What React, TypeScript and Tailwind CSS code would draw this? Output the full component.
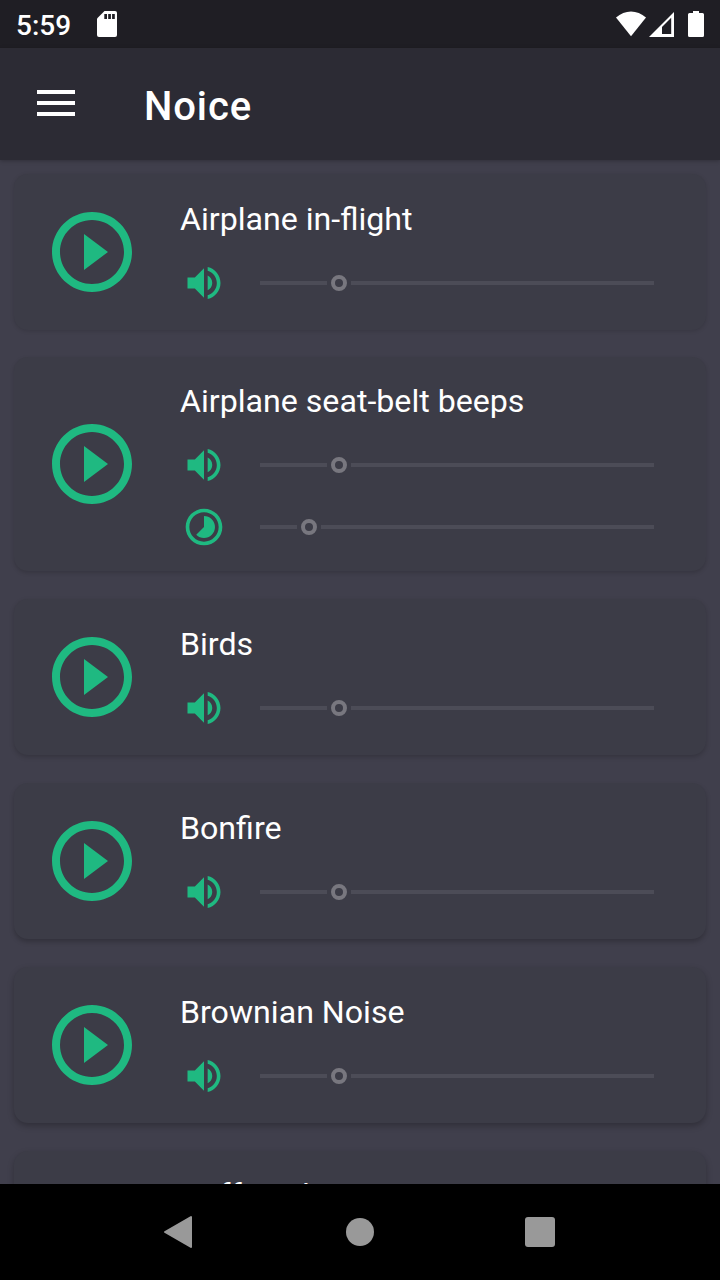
const PLAY =
  "M10 16.5l6-4.5-6-4.5v9zM12 2C6.48 2 2 6.48 2 12s4.48 10 10 10 10-4.48 10-10S17.52 2 12 2zm0 18c-4.41 0-8-3.59-8-8s3.59-8 8-8 8 3.59 8 8-3.59 8-8 8z";
const VOLUME =
  "M3 9v6h4l5 5V4L7 9H3zm13.5 3c0-1.77-1.02-3.29-2.5-4.03v8.05c1.48-.73 2.5-2.25 2.5-4.02zM14 3.23v2.06c2.89.86 5 3.54 5 6.71s-2.11 5.85-5 6.71v2.06c4.01-.91 7-4.49 7-8.77s-2.99-7.86-7-8.77z";
const TIMELAPSE =
  "M16.24 7.76C15.07 6.59 13.54 6 12 6v6l-4.24 4.24c2.34 2.34 6.14 2.34 8.49 0 2.34-2.34 2.34-6.14-.01-8.48zM12 2C6.48 2 2 6.48 2 12s4.48 10 10 10 10-4.48 10-10S17.52 2 12 2zm0 18c-4.42 0-8-3.58-8-8s3.58-8 8-8 8 3.58 8 8-3.58 8-8 8z";

function Icon({ d, className }: { d: string; className: string }) {
  return (
    <svg viewBox="0 0 24 24" fill="currentColor" className={className}>
      <path d={d} />
    </svg>
  );
}

function Slider({ icon, before }: { icon: string; before: number }) {
  return (
    <div className="flex h-11 items-center">
      <Icon d={icon} className="ml-0.5 h-11 w-11 shrink-0 text-[#1fb981]" />
      <div className="ml-[34px] flex w-[394px] items-center">
        <div className="h-1 shrink-0 bg-[#4c4c57]" style={{ width: before }} />
        <div className="mx-1 h-4 w-4 shrink-0 rounded-full border-4 border-[#78777f]" />
        <div className="h-1 flex-1 bg-[#4c4c57]" />
      </div>
    </div>
  );
}

type Sound = { name: string; size: string; interval?: boolean };

const sounds: Sound[] = [
  { name: "Airplane in-flight", size: "h-[156px] pt-[23px] mb-[27px] shadow-[0_1px_4px_rgba(0,0,0,0.14)]" },
  { name: "Airplane seat-belt beeps", size: "h-[214px] pt-[22px] mb-7 shadow-[0_2px_4px_rgba(0,0,0,0.16)]", interval: true },
  { name: "Birds", size: "h-[156px] pt-[23px] mb-7 shadow-[0_2px_5px_rgba(0,0,0,0.19)]" },
  { name: "Bonfire", size: "h-[156px] pt-[23px] mb-7 shadow-[0_3px_5px_rgba(0,0,0,0.22)]" },
  { name: "Brownian Noise", size: "h-[156px] pt-[23px] mb-7 shadow-[0_3px_6px_rgba(0,0,0,0.25)]" },
  { name: "Coffee Shop", size: "h-[156px] pt-[22px] shadow-[0_3px_6px_rgba(0,0,0,0.25)]" },
];

function SoundCard({ sound }: { sound: Sound }) {
  return (
    <section className={"flex shrink-0 rounded-[14px] bg-[#3c3c47] " + sound.size}>
      <div className="-mt-[23px] flex w-[166px] items-center pl-[30px]">
        <Icon d={PLAY} className={"h-24 w-24 text-[#1fb981] " + (sound.interval ? "mt-px" : "")} />
      </div>
      <div>
        <h2 className="h-11 text-[32.15px] leading-[44px] text-white">{sound.name}</h2>
        <div className="mt-5 flex flex-col gap-[18px]">
          <Slider icon={VOLUME} before={67} />
          {sound.interval && <Slider icon={TIMELAPSE} before={37} />}
        </div>
      </div>
    </section>
  );
}

export default function App() {
  return (
    <div className="flex h-[1280px] w-[720px] flex-col overflow-hidden bg-[#403f4c] font-['Roboto',sans-serif]">
      <div className="flex h-12 shrink-0 items-center bg-[#1f1e24] pr-4 pl-4 text-white">
        <span className="w-[81px] pt-[3px] text-[28px] leading-8 font-medium">5:59</span>
        <svg viewBox="0 0 20 26" className="h-[26px] w-5">
          <path d="M7.5 0H18a2 2 0 0 1 2 2v22a2 2 0 0 1-2 2H2a2 2 0 0 1-2-2V7.5z" fill="#fff" />
          <path d="M7.3 3h2.7v5H7.3zM11.2 3h2.7v5h-2.7zM15.1 3h2.7v5h-2.7z" fill="#1f1e24" />
        </svg>
        <svg viewBox="0 0 88 26" fill="#fff" className="ml-auto h-[26px] w-[88px]">
          <path d="M0 6.5C9-1.5 21-1.5 30 6.5L15 25.3z" />
          <path fillRule="evenodd" d="M58 1v25H33zM55.2 6.8L46 16V23h9.2z" />
          <path d="M77 0h6v2h3.5A1.5 1.5 0 0 1 88 3.5v21a1.5 1.5 0 0 1-1.5 1.5h-13a1.5 1.5 0 0 1-1.5-1.5v-21A1.5 1.5 0 0 1 73.5 2H77z" />
        </svg>
      </div>
      <header className="z-10 flex h-28 shrink-0 items-center bg-[#2c2b34] pl-[37px] shadow-[0_1px_4px_rgba(0,0,0,0.25)]">
        <div className="-mt-0.5 flex w-[38px] flex-col gap-[7px]">
          <div className="h-1 bg-white" />
          <div className="h-1 bg-white" />
          <div className="h-1 bg-white" />
        </div>
        <h1 className="ml-[69px] pt-1.5 text-[40px] leading-[48px] font-medium tracking-[0.9px] text-white">Noice</h1>
      </header>
      <main className="flex min-h-0 flex-1 flex-col overflow-hidden px-3.5 pt-3.5">
        {sounds.map((s) => (
          <SoundCard key={s.name} sound={s} />
        ))}
      </main>
      <nav className="z-10 flex h-24 shrink-0 items-center bg-black pl-[163px]">
        <svg viewBox="0 0 30 34" className="h-[34px] w-[30px]">
          <path d="M2 17L28 2V32z" fill="#999" stroke="#999" strokeWidth="2" strokeLinejoin="round" />
        </svg>
        <div className="ml-[153px] h-7 w-7 rounded-full bg-[#999]" />
        <div className="ml-[151px] h-[30px] w-[30px] rounded-[3px] bg-[#999]" />
      </nav>
    </div>
  );
}
